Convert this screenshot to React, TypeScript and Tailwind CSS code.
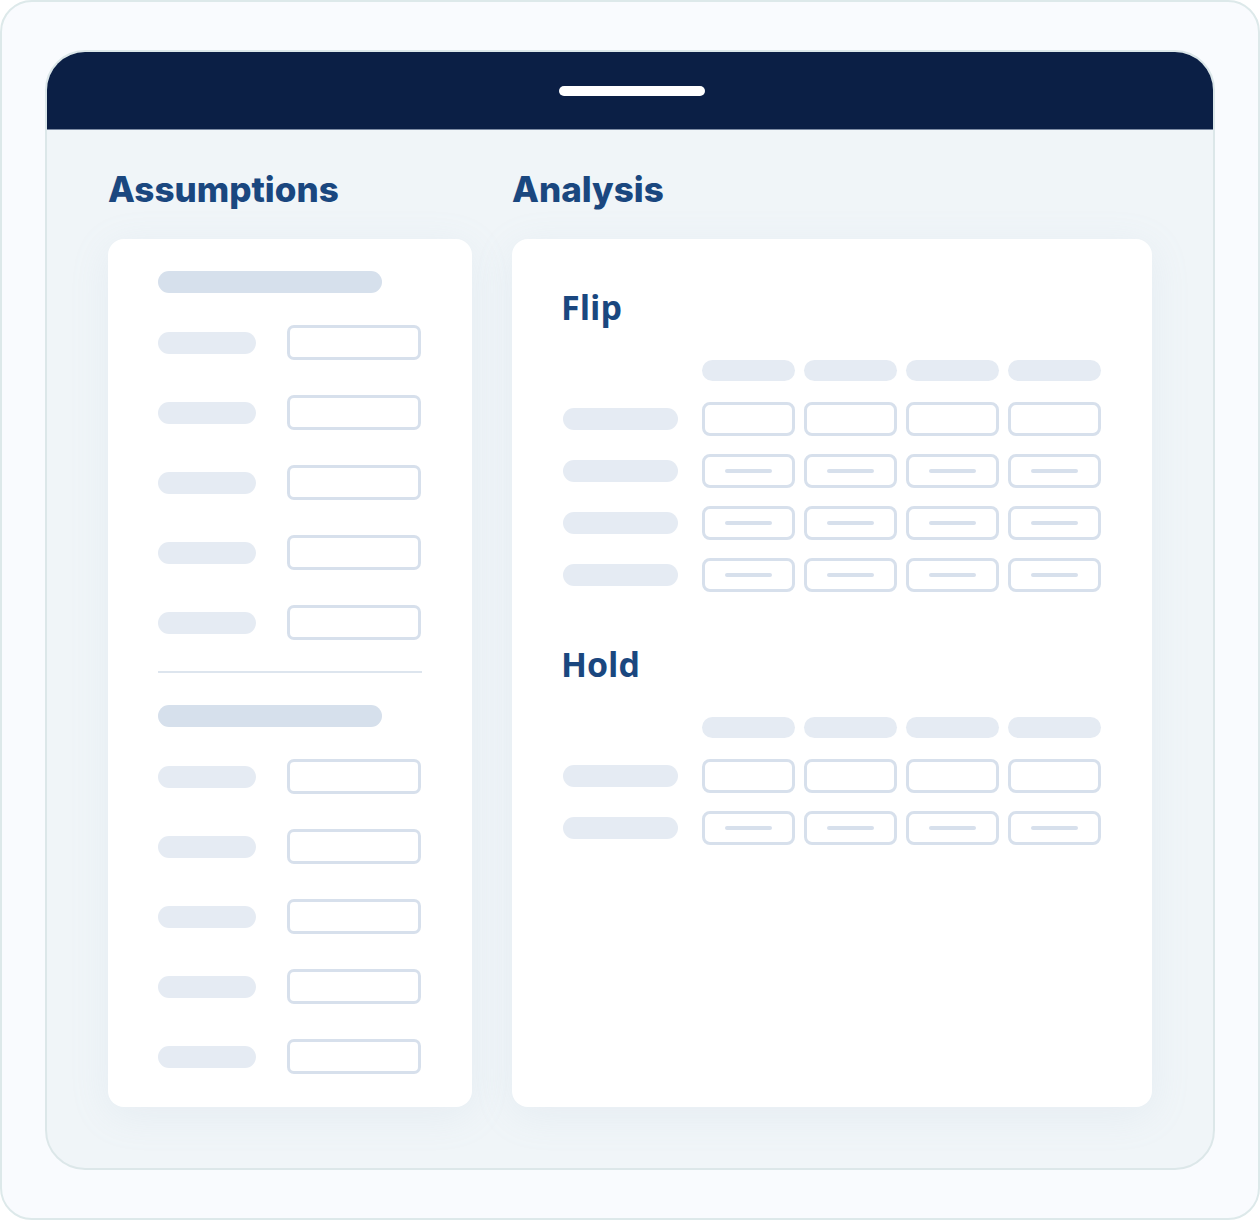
import React from 'react';

const heading = "text-[35px] leading-[40px] font-extrabold text-[#1a477f]";
const sub = "text-[34px] leading-[40px] font-bold text-[#1a477f] ml-[-2px]";

function FieldRow() {
  return (
    <div className="flex items-center h-[35px]">
      <div className="w-[98px] h-[22px] rounded-full bg-[#e5ebf3]" />
      <div className="ml-[31px] w-[134px] h-[35px] rounded-[7px] border-[3px] border-[#d7e0ec]" />
    </div>
  );
}

function AssumptionGroup() {
  return (
    <>
      <div className="w-[224px] h-[22px] rounded-full bg-[#d6e0ec]" />
      <div className="mt-[32px] flex flex-col gap-[35px]">
        {[0, 1, 2, 3, 4].map(i => (
          <FieldRow key={i} />
        ))}
      </div>
    </>
  );
}

function Cell({ dash }: { dash: boolean }) {
  return (
    <div className="w-[93px] h-[34px] rounded-[8px] border-[3px] border-[#d7e0ec] flex items-center justify-center">
      {dash && <div className="w-[47px] h-[4px] rounded-full bg-[#d7e0ec]" />}
    </div>
  );
}

function Table({ title, rows }: { title: string; rows: number }) {
  return (
    <div>
      <div className={sub} style={{ fontFamily: '"Open Sans", sans-serif' }}>{title}</div>
      <div className="mt-[33px] ml-[139px] flex gap-[9px]">
        {[0, 1, 2, 3].map(i => (
          <div key={i} className="w-[93px] h-[21px] rounded-full bg-[#e5ebf3]" />
        ))}
      </div>
      <div className="mt-[21px] flex flex-col gap-[18px]">
        {Array.from({ length: rows }).map((_, r) => (
          <div key={r} className="flex items-center">
            <div className="w-[115px] h-[22px] rounded-full bg-[#e5ebf3] mr-[24px]" />
            <div className="flex gap-[9px]">
              {[0, 1, 2, 3].map(c => (
                <Cell key={c} dash={r > 0} />
              ))}
            </div>
          </div>
        ))}
      </div>
    </div>
  );
}

export default function App() {
  return (
    <div
      className="w-[1260px] h-[1220px] rounded-[32px] border-2 border-[#dde9ea] bg-[#f9fbfe] pt-[48px] px-[43px]"
      style={{ fontFamily: 'Inter, "Noto Sans", sans-serif' }}
    >
      <div className="h-[1120px] rounded-[40px] border-2 border-[#dce7e9] bg-[#f0f5f8] overflow-hidden flex flex-col">
        {/* window bar */}
        <div className="h-[78px] shrink-0 bg-[#0b1f45] border-b border-[#7d8ba3] flex items-center justify-center">
          <div className="ml-[4px] w-[146px] h-[10px] rounded-full bg-white" />
        </div>

        <div className="flex-1 flex gap-[40px] px-[61px] pb-[61px]">
          {/* Assumptions */}
          <div className="w-[364px] flex flex-col">
            <div className="h-[109px] pt-[39px]">
              <div className={heading}>Assumptions</div>
            </div>
            <div className="flex-1 bg-white rounded-[16px] pt-[32px] pl-[50px] shadow-[0_8px_40px_rgba(160,185,205,0.12)]">
              <AssumptionGroup />
              <div className="mt-[31px] w-[264px] h-[2px] bg-[#dde5ee]" />
              <div className="mt-[32px]">
                <AssumptionGroup />
              </div>
            </div>
          </div>

          {/* Analysis */}
          <div className="flex-1 flex flex-col">
            <div className="h-[109px] pt-[39px]">
              <div className={heading}>Analysis</div>
            </div>
            <div className="flex-1 bg-white rounded-[16px] pt-[48px] pl-[51px] shadow-[0_8px_40px_rgba(160,185,205,0.12)]">
              <Table title="Flip" rows={4} />
              <div className="mt-[52px]">
                <Table title="Hold" rows={2} />
              </div>
            </div>
          </div>
        </div>
      </div>
    </div>
  );
}
